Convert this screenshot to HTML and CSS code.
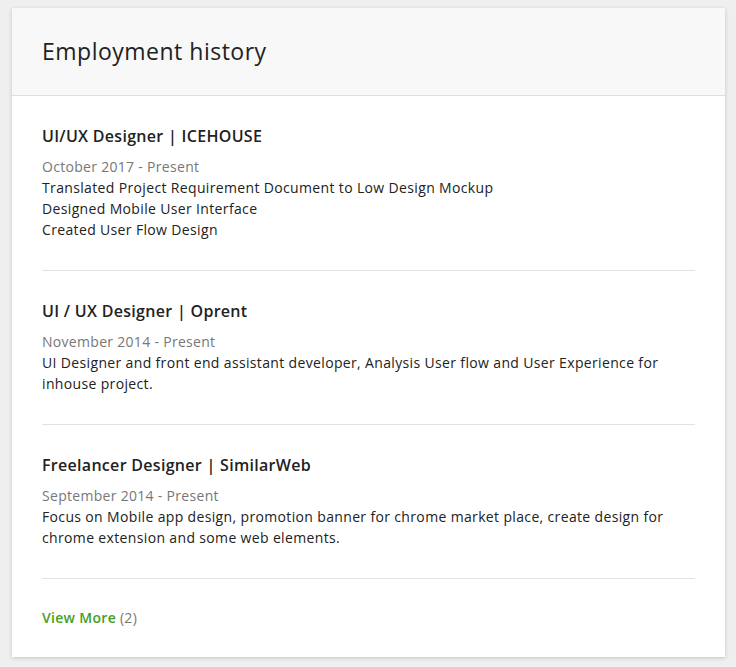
FILE: index.html
```html
<!DOCTYPE html>
<html lang="en">
<head>
<meta charset="utf-8">
<title>Employment history</title>
<link rel="stylesheet" href="styles.css">
</head>
<body>
<section class="card">
  <header class="card-header">
    <h1 class="card-title">Employment history</h1>
  </header>
  <div class="card-body">
    <article class="job">
      <h2 class="job-title">UI/UX Designer | ICEHOUSE</h2>
      <p class="job-date">October 2017 - Present</p>
      <p class="job-desc">Translated Project Requirement Document to Low Design Mockup<br>Designed Mobile User Interface<br>Created User Flow Design</p>
    </article>
    <article class="job">
      <h2 class="job-title">UI / UX Designer | Oprent</h2>
      <p class="job-date">November 2014 - Present</p>
      <p class="job-desc">UI Designer and front end assistant developer, Analysis User flow and User Experience for inhouse project.</p>
    </article>
    <article class="job">
      <h2 class="job-title">Freelancer Designer | SimilarWeb</h2>
      <p class="job-date">September 2014 - Present</p>
      <p class="job-desc">Focus on Mobile app design, promotion banner for chrome market place, create design for chrome extension and some web elements.</p>
    </article>
    <div class="card-footer">
      <a class="view-more" href="#">View More</a> <span class="count">(2)</span>
    </div>
  </div>
</section>
</body>
</html>
```

FILE: styles.css
```css
html, body {
  margin: 0;
  padding: 0;
}
body {
  background: #efefef;
  padding: 8px 11px 10px 12px;
  font-family: "Open Sans", "Liberation Sans", sans-serif;
  color: #222;
}
.card {
  background: #fff;
  box-shadow: 0 1px 4px rgba(0, 0, 0, 0.18);
}
.card-header {
  background: #f8f8f8;
  border-bottom: 1px solid #dedede;
  padding: 28px 30px 29px;
}
.card-title {
  margin: 0;
  font-size: 23px;
  line-height: 30px;
  font-weight: 400;
  letter-spacing: 0.5px;
  color: #222;
}
.card-body {
  padding: 0 30px;
}
.job {
  padding: 29px 0 30px;
  border-bottom: 1px solid #e2e2e2;
}
.job-title {
  margin: 0 0 9px;
  font-size: 16px;
  line-height: 22px;
  font-weight: 600;
  letter-spacing: 0.3px;
  color: #222;
}
.job-date {
  margin: 0;
  font-size: 14px;
  line-height: 21px;
  letter-spacing: 0.3px;
  color: #777;
}
.job-desc {
  margin: 0;
  font-size: 14px;
  line-height: 21px;
  letter-spacing: 0.35px;
  color: #222;
}
.card-footer {
  padding: 28px 0 29px;
  font-size: 14px;
  line-height: 21px;
  letter-spacing: 0.3px;
  color: #777;
}
.view-more {
  color: #45a01e;
  font-weight: 600;
  text-decoration: none;
}
```
